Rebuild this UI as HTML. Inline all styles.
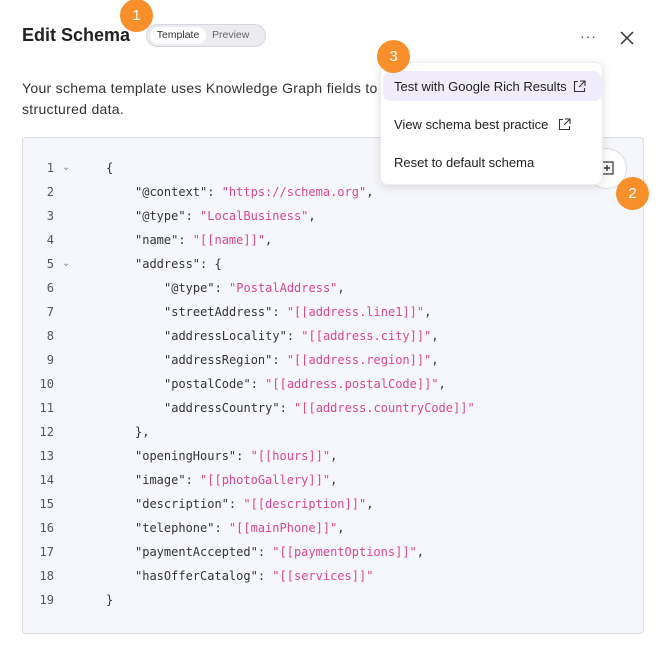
<!DOCTYPE html>
<html><head><style>
*{margin:0;padding:0;box-sizing:border-box}
body{width:664px;height:654px;background:#fff;font-family:"Liberation Sans",sans-serif;position:relative;overflow:hidden;color:#1f2329}
.abs{position:absolute}
.badge{position:absolute;width:33px;height:33px;border-radius:50%;background:#f7902a;color:#fff;font-size:15px;text-align:center;line-height:33px}
.code{position:absolute;left:22px;top:137px;width:622px;height:497px;background:#f6f7fc;border:1px solid #dcdde3;border-radius:4px}
.ln{position:absolute;left:0;width:32px;text-align:right;font-family:"DejaVu Sans Mono",monospace;font-size:12px;color:#555;line-height:24px}
.cl{position:absolute;font-family:"DejaVu Sans Mono",monospace;font-size:12px;color:#333;line-height:24px;white-space:pre}
.s{color:#d9478f}
.chev{position:absolute;left:40px;font-size:10px;color:#888;line-height:24px}
.menu{position:absolute;left:380px;top:62px;width:223px;height:123px;background:#fff;border-radius:8px;box-shadow:0 2px 10px rgba(0,0,0,.13);border:1px solid #eee}
.mi{position:absolute;left:13px;font-size:13px;color:#222;white-space:nowrap}
</style></head><body>
<div class="abs" style="left:22px;top:25px;font-size:18px;font-weight:bold;color:#222">Edit Schema</div>
<div class="abs" style="left:146px;top:24px;width:120px;height:23px;border-radius:12px;background:#ececf0;border:1px solid #d6d6dc"></div>
<div class="abs" style="left:150px;top:27px;width:56px;height:17px;border-radius:9px;background:#fff;font-size:10.5px;text-align:center;line-height:17px;color:#333">Template</div>
<div class="abs" style="left:212px;top:27px;font-size:10.5px;line-height:17px;color:#666">Preview</div>
<div class="badge" style="left:120px;top:-1px">1</div>
<div class="abs" style="left:580px;top:28px;font-size:14px;color:#444;letter-spacing:1px">···</div>
<svg class="abs" style="left:620px;top:31px" width="14" height="14" viewBox="0 0 14 14"><path d="M1 1L13 13M13 1L1 13" stroke="#333" stroke-width="1.5"/></svg>
<div class="abs" style="left:22px;top:78px;font-size:14px;letter-spacing:0.3px;line-height:21px;color:#333;width:630px">Your schema template uses Knowledge Graph fields to populate your page's<br>structured data.</div>
<div class="code"></div>
<div class="abs" style="left:22px;top:137px;width:622px">
<div class="ln" style="top:19px">1</div><div class="chev" style="top:19px">&#8964;</div><div class="cl" style="top:19px;left:84px">{</div>
<div class="ln" style="top:43px">2</div><div class="cl" style="top:43px;left:113px">"@context": <span class="s">"https://schema.org"</span>,</div>
<div class="ln" style="top:67px">3</div><div class="cl" style="top:67px;left:113px">"@type": <span class="s">"LocalBusiness"</span>,</div>
<div class="ln" style="top:91px">4</div><div class="cl" style="top:91px;left:113px">"name": <span class="s">"[[name]]"</span>,</div>
<div class="ln" style="top:115px">5</div><div class="chev" style="top:115px">&#8964;</div><div class="cl" style="top:115px;left:113px">"address": {</div>
<div class="ln" style="top:139px">6</div><div class="cl" style="top:139px;left:142px">"@type": <span class="s">"PostalAddress"</span>,</div>
<div class="ln" style="top:163px">7</div><div class="cl" style="top:163px;left:142px">"streetAddress": <span class="s">"[[address.line1]]"</span>,</div>
<div class="ln" style="top:187px">8</div><div class="cl" style="top:187px;left:142px">"addressLocality": <span class="s">"[[address.city]]"</span>,</div>
<div class="ln" style="top:211px">9</div><div class="cl" style="top:211px;left:142px">"addressRegion": <span class="s">"[[address.region]]"</span>,</div>
<div class="ln" style="top:235px">10</div><div class="cl" style="top:235px;left:142px">"postalCode": <span class="s">"[[address.postalCode]]"</span>,</div>
<div class="ln" style="top:259px">11</div><div class="cl" style="top:259px;left:142px">"addressCountry": <span class="s">"[[address.countryCode]]"</span></div>
<div class="ln" style="top:283px">12</div><div class="cl" style="top:283px;left:113px">},</div>
<div class="ln" style="top:307px">13</div><div class="cl" style="top:307px;left:113px">"openingHours": <span class="s">"[[hours]]"</span>,</div>
<div class="ln" style="top:331px">14</div><div class="cl" style="top:331px;left:113px">"image": <span class="s">"[[photoGallery]]"</span>,</div>
<div class="ln" style="top:355px">15</div><div class="cl" style="top:355px;left:113px">"description": <span class="s">"[[description]]"</span>,</div>
<div class="ln" style="top:379px">16</div><div class="cl" style="top:379px;left:113px">"telephone": <span class="s">"[[mainPhone]]"</span>,</div>
<div class="ln" style="top:403px">17</div><div class="cl" style="top:403px;left:113px">"paymentAccepted": <span class="s">"[[paymentOptions]]"</span>,</div>
<div class="ln" style="top:427px">18</div><div class="cl" style="top:427px;left:113px">"hasOfferCatalog": <span class="s">"[[services]]"</span></div>
<div class="ln" style="top:451px">19</div><div class="cl" style="top:451px;left:84px">}</div>
</div>
<div class="abs" style="left:586px;top:148px;width:41px;height:41px;border-radius:50%;background:#fff;border:1px solid #ddd"></div>
<svg class="abs" style="left:599px;top:160px" width="16" height="16" viewBox="0 0 16 16"><rect x="2" y="2" width="12" height="12" fill="none" stroke="#333" stroke-width="1.2"/><path d="M8 5v6M5 8h6" stroke="#333" stroke-width="1.4"/></svg>
<div class="badge" style="left:616px;top:177px">2</div>
<div class="menu">
<div class="abs" style="left:2px;top:8px;width:219px;height:30px;border-radius:8px;background:#f1ecfb"></div>
<div class="mi" style="top:16px">Test with Google Rich Results</div>
<svg class="abs" style="left:192px;top:17px" width="13" height="13" viewBox="0 0 13 13"><path d="M5 1.5H1.5v10h10V8M7 1h5v5M12 1L6 7" fill="none" stroke="#333" stroke-width="1.1"/></svg>
<div class="mi" style="top:54px">View schema best practice</div>
<svg class="abs" style="left:177px;top:55px" width="13" height="13" viewBox="0 0 13 13"><path d="M5 1.5H1.5v10h10V8M7 1h5v5M12 1L6 7" fill="none" stroke="#333" stroke-width="1.1"/></svg>
<div class="mi" style="top:92px">Reset to default schema</div>
</div>
<div class="badge" style="left:377px;top:40px">3</div>
</body></html>
